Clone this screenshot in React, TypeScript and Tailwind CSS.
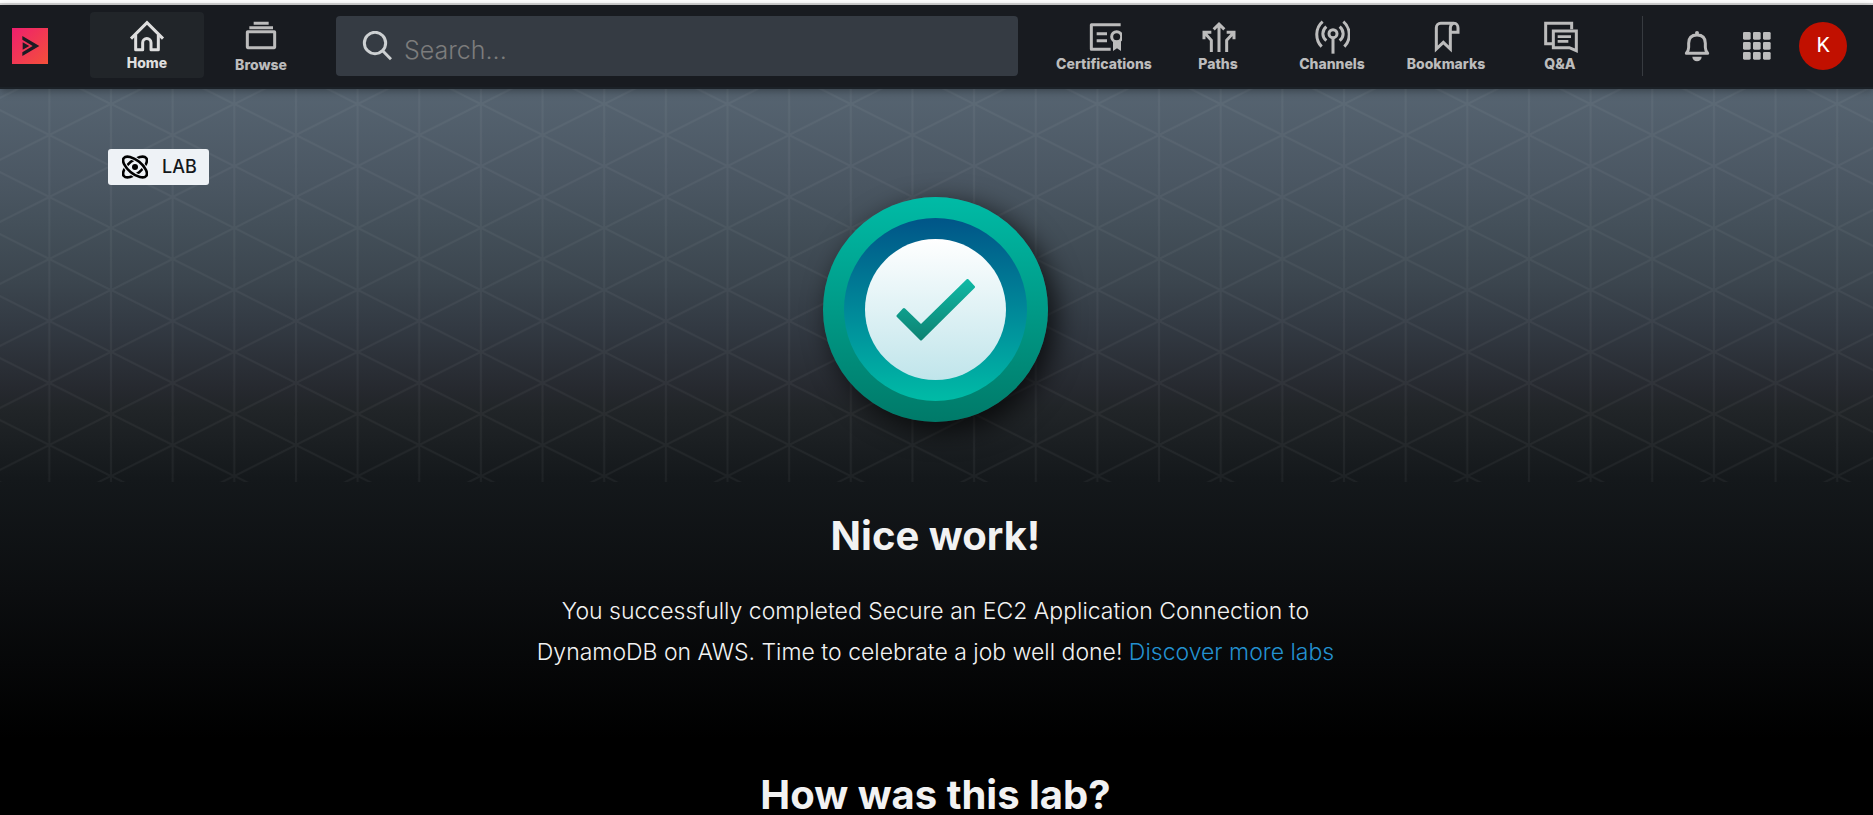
import type { ReactNode } from "react";

const stroke = {
  fill: "none",
  stroke: "currentColor",
  strokeWidth: 9,
} as const;

function Icon({ children, viewBox = "0 0 108 108" }: { children: ReactNode; viewBox?: string }) {
  return (
    <svg className="size-9" viewBox={viewBox} aria-hidden="true" {...stroke}>
      {children}
    </svg>
  );
}

function HomeIcon() {
  return (
    <Icon>
      <path d="M6 59 54 11 102 59" strokeLinejoin="miter" />
      <path d="M20 48V92H41V71a12.5 12.5 0 0 1 25 0V92H88V48" strokeLinejoin="round" />
    </Icon>
  );
}

function BrowseIcon() {
  return (
    <Icon>
      <path d="M32 7H77M19 20H90" />
      <rect x="13" y="32" width="82" height="48" rx="1" />
    </Icon>
  );
}

function CertificationsIcon() {
  return (
    <Icon>
      <path d="M104 14H16V88H74" strokeLinejoin="round" />
      <path d="M32 41H63M32 62H63" />
      <circle cx="92" cy="50" r="15" />
      <path d="M81 62V93L93 85 105 93V62Z" fill="currentColor" stroke="none" />
    </Icon>
  );
}

function PathsIcon() {
  return (
    <Icon>
      <path d="M57 13V96M41 28 57 12 73 28" />
      <path d="M12 58V37H34M12 37 34 61V96" />
      <path d="M80 37H102V58M102 37 80 61V96" />
    </Icon>
  );
}

function ChannelsIcon() {
  return (
    <Icon viewBox="-3 0 108 108">
      <circle cx="54" cy="41" r="12" />
      <path d="M54 53V101" />
      <path d="M34 20C20 32 20 50 34 62M74 20C88 32 88 50 74 62" />
      <path d="M23 5C0 24 0 60 20 80M85 5C108 24 108 60 88 80" />
    </Icon>
  );
}

function BookmarksIcon() {
  return (
    <Icon>
      <path d="M79 10H38A13 13 0 0 0 25 23V87L46 67 67 87V24A11.5 14 0 0 1 90 24V37H67" />
    </Icon>
  );
}

function QuestionsIcon() {
  return (
    <Icon>
      <path d="M33 71H11V10H89V28" />
      <path d="M34 33H103V92L82 83H34Z" />
      <path d="M47 50H87M47 64H79" strokeWidth={8} />
    </Icon>
  );
}

function BellIcon() {
  return (
    <Icon>
      <path
        d="M22 76Q29 68 29 58V46C29 30 38 21 54 21 70 21 79 30 79 46V58Q79 68 86 76Z"
        strokeLinejoin="round"
      />
      <circle cx="54" cy="15" r="6" fill="currentColor" stroke="none" />
      <path d="M40 86H68A14 14 0 0 1 40 86Z" fill="currentColor" stroke="none" />
    </Icon>
  );
}

function GridIcon() {
  const cells = [0, 30, 60];
  return (
    <svg className="size-7" viewBox="0 0 84 84" fill="currentColor" aria-hidden="true">
      {cells.map((y) => cells.map((x) => <rect key={`${x}-${y}`} x={x} y={y} width="23" height="23" rx="4" />))}
    </svg>
  );
}

function SearchIcon() {
  return (
    <svg className="size-[30px] shrink-0 text-[#cdd0d2]" viewBox="0 0 90 90" aria-hidden="true" {...stroke}>
      <circle cx="39" cy="36" r="32" />
      <path d="M62 59 87 85" />
    </svg>
  );
}

function Logo() {
  return (
    <a href="#" aria-label="Dashboard" className="shrink-0">
      <svg className="size-9" viewBox="0 0 108 108" aria-hidden="true">
        <defs>
          <linearGradient id="logo" x1="0" y1="0" x2="1" y2="1">
            <stop offset="0" stopColor="#ee1f6e" />
            <stop offset="1" stopColor="#f4503a" />
          </linearGradient>
        </defs>
        <rect width="108" height="108" fill="url(#logo)" />
        <path d="M31 24 82 54 31 84V73L62 54 31 35Z" fill="#1c1c24" />
        <path d="M32 43 52 54 32 65Z" fill="#1c1c24" />
      </svg>
    </a>
  );
}

function LabIcon() {
  return (
    <svg className="h-6 w-[26px]" viewBox="0 0 78 72" fill="none" aria-hidden="true">
      <ellipse cx="39" cy="36" rx="43" ry="20" transform="rotate(-39 39 36)" stroke="#000" strokeWidth="8" />
      <ellipse cx="39" cy="36" rx="43" ry="20" transform="rotate(39 39 36)" stroke="#eef2f6" strokeWidth="14" />
      <ellipse cx="39" cy="36" rx="43" ry="20" transform="rotate(39 39 36)" stroke="#000" strokeWidth="8" />
      <circle cx="39" cy="36" r="9" fill="#000" />
    </svg>
  );
}

function NavItem({ label, icon, active = false }: { label: string; icon: ReactNode; active?: boolean }) {
  return (
    <a
      href="#"
      className={
        active
          ? "flex h-[66px] w-[114px] shrink-0 flex-col items-center rounded bg-[#212529] pt-[7px] text-[#dedede]"
          : "flex h-[66px] w-[114px] shrink-0 flex-col items-center rounded pt-[7px] text-[#bcbcbc]"
      }
    >
      {icon}
      <span className="text-sm leading-4 font-extrabold">{label}</span>
    </a>
  );
}

function Header() {
  return (
    <header className="relative z-10 flex h-[84px] items-center border-b-2 border-[#1b2127] bg-[#181b20] pr-[26px] pl-3 shadow-[0_2px_8px_rgba(0,0,0,0.35)]">
      <Logo />
      <nav className="ml-[42px] flex" aria-label="Main">
        <NavItem label="Home" icon={<HomeIcon />} active />
        <div className="pt-0.5">
          <NavItem label="Browse" icon={<BrowseIcon />} />
        </div>
      </nav>
      <label className="ml-[18px] flex h-[60px] min-w-0 flex-1 items-center gap-3 rounded bg-[#353b43] pr-4 pl-[26px]">
        <SearchIcon />
        <input
          type="search"
          aria-label="Search"
          placeholder="Search..."
          className="min-w-0 flex-1 bg-transparent pt-[7px] text-[25px] leading-8 font-light text-white outline-none placeholder:text-[#7c7c7c]"
        />
      </label>
      <nav className="ml-[29px] flex" aria-label="Library">
        <NavItem label="Certifications" icon={<CertificationsIcon />} />
        <NavItem label="Paths" icon={<PathsIcon />} />
        <NavItem label="Channels" icon={<ChannelsIcon />} />
        <NavItem label="Bookmarks" icon={<BookmarksIcon />} />
        <NavItem label="Q&A" icon={<QuestionsIcon />} />
      </nav>
      <div className="ml-[25px] flex h-[60px] shrink-0 items-center border-l border-[#373b40] pl-9 text-[#bcbcbc]">
        <button type="button" aria-label="Notifications">
          <BellIcon />
        </button>
        <button type="button" aria-label="Apps" className="ml-7">
          <GridIcon />
        </button>
        <button
          type="button"
          aria-label="Account"
          className="ml-7 flex size-12 items-center justify-center rounded-full bg-[#c11000] font-[Roboto] text-[21px] text-white"
        >
          K
        </button>
      </div>
    </header>
  );
}

function LatticePattern() {
  return (
    <svg className="absolute inset-x-0 top-0 h-[393px] w-full" aria-hidden="true">
      <defs>
        <pattern id="lattice" width="123.3" height="62" x="-12.3" y="-16" patternUnits="userSpaceOnUse">
          <path
            d="M0-31 123.3 31M0 93 123.3 31M0 31 123.3-31M0 31 123.3 93M0 0V62M123.3 0V62M61.65 0V62"
            stroke="#fff"
            strokeOpacity="0.045"
            strokeWidth="2"
            fill="none"
          />
        </pattern>
      </defs>
      <rect width="100%" height="100%" fill="url(#lattice)" />
    </svg>
  );
}

function CompletionBadge() {
  return (
    <div className="mt-3 flex size-[225px] items-center justify-center self-center rounded-full bg-linear-to-b from-[#00bba6] to-[#007a69] shadow-[8px_8px_28px_rgba(0,0,0,0.75)]">
      <div className="flex size-[183px] items-center justify-center rounded-full bg-linear-to-b from-[#005588] to-[#00bba6]">
        <div className="flex size-[141px] items-center justify-center rounded-full bg-linear-to-b from-white to-[#c0e5eb]">
          <svg className="h-[62px] w-20" viewBox="0 0 80 62" role="img" aria-label="Completed">
            <defs>
              <linearGradient id="check" x1="0" y1="0" x2="0" y2="1">
                <stop offset="0" stopColor="#0fb8a4" />
                <stop offset="1" stopColor="#0d8373" />
              </linearGradient>
            </defs>
            <path
              d="M71.5 1.5 77.5 8 25 60 2 37 8 30.5 25 47Z"
              fill="url(#check)"
              stroke="url(#check)"
              strokeWidth="3"
              strokeLinejoin="round"
            />
          </svg>
        </div>
      </div>
    </div>
  );
}

export default function App() {
  return (
    <div className="flex min-h-screen flex-col bg-black font-[Inter,'Noto_Sans',sans-serif]">
      <div className="h-[5px] border-b-2 border-[#d9d9d9] bg-white" />
      <Header />
      <main className="relative flex flex-1 flex-col bg-[linear-gradient(#566471_0px,#4b5763_90px,#44505a_135px,#3c464f_190px,#323942_240px,#26292f_300px,#212528_320px,#14181b_390px,#0c0e10_500px,#000_650px)]">
        <LatticePattern />
        <div className="relative flex flex-col pt-[60px] pr-[110px] pl-[108px]">
          <div className="flex h-9 items-center gap-[14px] self-start rounded-[3px] bg-[#eef2f6] pr-3 pl-[14px] text-lg font-medium text-[#14181b]">
            <LabIcon />
            LAB
          </div>
          <CompletionBadge />
          <h1 className="mt-[88px] self-center text-[40px] leading-[52px] font-bold text-[#f2f2f2]">Nice work!</h1>
          <p className="mt-[29px] max-w-[820px] self-center text-center text-[23px] leading-[41px] font-light text-[#f2f2f2]">
            You successfully completed Secure an EC2 Application Connection to DynamoDB on AWS. Time to celebrate a job
            well done!{" "}
            <a href="#" className="text-[#2391d0]">
              Discover more labs
            </a>
          </p>
          <h2 className="mt-[102px] self-center text-[40px] leading-10 font-bold text-[#f2f2f2]">How was this lab?</h2>
        </div>
      </main>
    </div>
  );
}
